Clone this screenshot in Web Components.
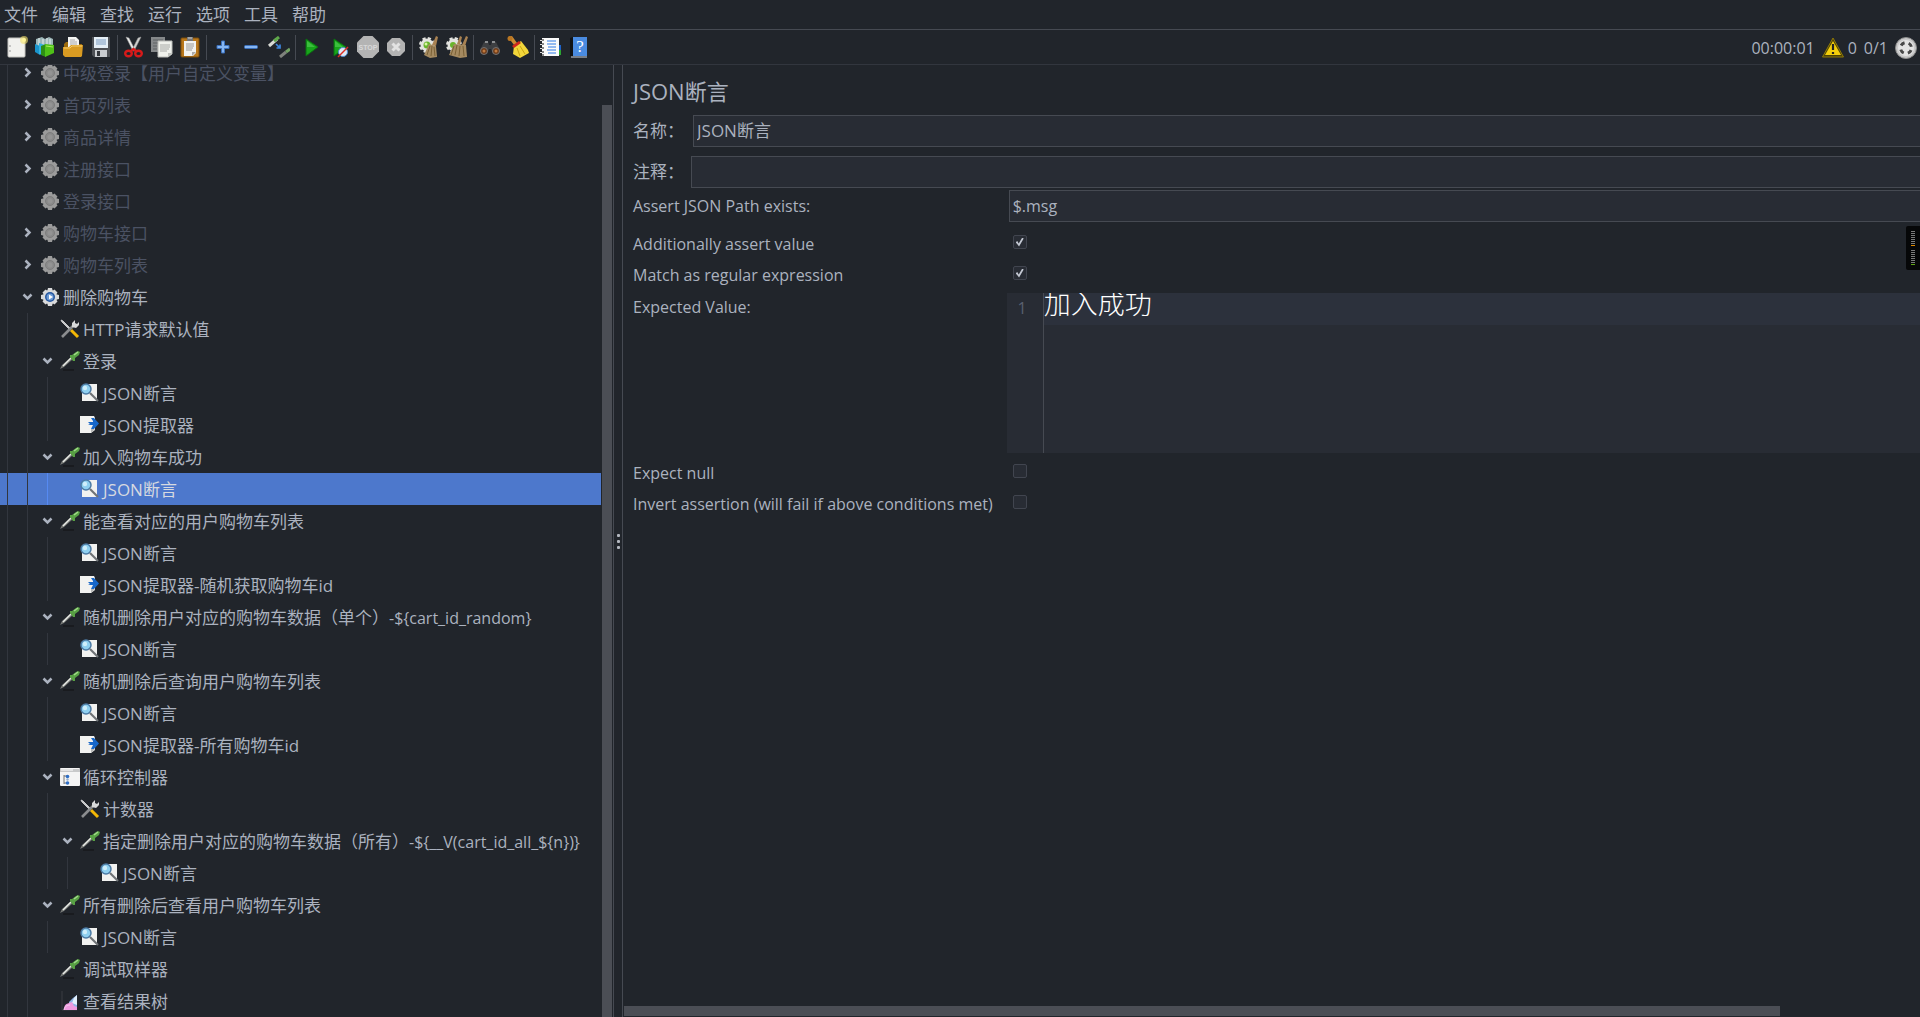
<!DOCTYPE html>
<html lang="zh-CN">
<head>
<meta charset="utf-8">
<title>JSON断言</title>
<style>
  :root {
    --bg: #21252b;
    --field: #282c34;
    --line: #464a52;
    --soft-line: #32363e;
    --text: #abb2bf;
    --muted: #4b5263;
    --thumb: #4b4e55;
    --select: #4d78cc;
  }
  html, body { height: 100%; }
  body {
    margin: 0;
    background: var(--bg);
    color: var(--text);
    font: 17px/32px "Open Sans", "Noto Sans CJK SC", sans-serif;
    overflow: hidden;
  }
</style>
</head>
<body>
<jm-app></jm-app>

<script>
const GEAR = 'M8 1h4l1 4H7zM8 19h4l1-4H7zM1 8v4l4 1V7zM19 8v4l-4 1V7zM2.500 5.500l3-3 3 2-4 4zM17.500 5.500l-3-3-3 2 4 4zM2.500 14.500l3 3 3-2-4-4zM17.500 14.500l-3 3-3-2 4-4z';
const ICONS = {
  newfile: `<rect x="2" y="2" width="17" height="19" rx="1" fill="#f1f1ee" stroke="#c4c4c0"/><path d="M4 9v2M4 14v2" stroke="#999"/><circle cx="18" cy="4" r="4" fill="#f5e36b" opacity=".6"/><circle cx="18" cy="4" r="2" fill="#fff59a"/>`,
  templates: `<path d="M2 3l6-2 3 2 4-2 4 2v10H2z" fill="#9db6b8"/><path d="M5 2v8M9 3v8M13 2v6M16 3v6" stroke="#e6eeee"/><path d="M1 8l5 2v9l-5-3z" fill="#1a94cc"/><path d="M5 7l6 2v11l-6-2z" fill="#35b2e0"/><path d="M7 10l5-2v13l-5-2z" fill="#2d8f14"/><path d="M11 8l9 1v8l-9 4z" fill="#4fc018"/><path d="M12 10l7 1" stroke="#a4ee5c"/>`,
  open: `<path d="M2 8l2-2h5l2 2h9v12H2z" fill="#9c6a0c"/><path d="M6 1h8l3 3v9H6z" fill="#f4f4f2"/><path d="M8 4h5M8 6h7M8 8h7" stroke="#aaa"/><path d="M1 11h6l2-2h12l-1 11-1 1H3l-2-2z" fill="#d99b22"/><path d="M2 12h6l2-2h10" stroke="#f5cd6a" fill="none"/>`,
  save: `<path d="M2 1h18v20H4l-2-2z" fill="#4d5055"/><path d="M4 1h14v11H4z" fill="#e4eef6"/><path d="M6 4h10M6 6h10M6 8h10" stroke="#7d9cc0"/><path d="M5 14h12v7H5z" fill="#c9ccd0"/><path d="M7 15h3v5H7z" fill="#34373c"/>`,
  cut: `<path d="M3 1l3 1 6 12-2 1z" fill="#ececea" stroke="#999" stroke-width=".5"/><path d="M18 1l-3 1-6 12 2 1z" fill="#cfcfcd" stroke="#999" stroke-width=".5"/><g fill="none" stroke="#d71a1a" stroke-width="2.4"><ellipse cx="5.500" cy="17.500" rx="3.300" ry="2.800"/><ellipse cx="15.500" cy="17.500" rx="3.300" ry="2.800"/><path d="M8 15l2.500-2 2.500 2"/></g>`,
  copy: `<rect x="0" y="1" width="14" height="15" fill="#85888a"/><path d="M2 4h10M2 7h10M2 10h4M2 13h4" stroke="#5f6264"/><path d="M7 5h14v13l-4 3H7z" fill="#eff1ec" stroke="#babcb8"/><path d="M9 9h10M9 11h10M9 13h9M9 15h7" stroke="#a9aba8"/><path d="M21 17h-4v4z" fill="#bfc1bd"/>`,
  paste: `<rect x="2" y="2" width="18" height="19" rx="1" fill="#b8771b" stroke="#7d4f0c"/><path d="M5 5h12v12l-3 3H5z" fill="#f2f2ef"/><path d="M8 1h6v4H8z" fill="#777"/><path d="M9 2h4" stroke="#ccc"/><path d="M7 8h8M7 10h8M7 12h7M7 14h6" stroke="#9a9a98"/><path d="M17 16h-4v4z" fill="#aaa"/>`,
  plus: `<path d="M9.500 5h3v4.500H17v3h-4.500V17h-3v-4.500H5v-3h4.500z" fill="#86b6f2" stroke="#3a6fbb"/>`,
  minus: `<rect x="4.500" y="9.500" width="13" height="3" rx="1" fill="#86b6f2" stroke="#3a6fbb"/>`,
  toggle: `<path d="M1 10L9 3" stroke="#d9dbd6" stroke-width="3"/><path d="M6 5l5-4" stroke="#5fa84a" stroke-width="3"/><path d="M8 8l4 4M12 8.500V12H8.500" stroke="#3c86e0" stroke-width="1.700" fill="none"/><path d="M12 21l6-5" stroke="#7f827d" stroke-width="3"/><path d="M18 16l4-3" stroke="#72a164" stroke-width="3"/>`,
  run: `<path d="M5 3l12 8-12 9z" fill="#18a51b" stroke="#0b6f10"/><path d="M6 5l8 6H6z" fill="#4bc94d" opacity=".7"/>`,
  runnp: `<path d="M5 3l12 8-12 9z" fill="#18a51b" stroke="#0b6f10"/><path d="M6 5l8 6H6z" fill="#4bc94d" opacity=".7"/><circle cx="14" cy="16" r="4.500" fill="#dfe9f5" stroke="#4f8bd0"/><path d="M9 21L19 11" stroke="#dd2c22" stroke-width="1.500"/>`,
  stop: `<path d="M6.500 0h9L22 6.500v9L15.500 22h-9L0 15.500v-9z" fill="#b4b4b4"/><text x="11" y="14" text-anchor="middle" font-family="Liberation Sans" font-weight="700" font-size="7" fill="#d8d8d8">STOP</text>`,
  shutdown: `<path d="M7 2h8l5 5v8l-5 5H7l-5-5V7z" fill="#b3b3b3"/><path d="M7.500 7.500l7 7M14.500 7.500l-7 7" stroke="#e2e2e2" stroke-width="3"/>`,
  clear: `<circle cx="9" cy="9" r="6.500" fill="#e3e3df" stroke="#e3e3df" stroke-width="3" stroke-dasharray="3 2.100"/><circle cx="9" cy="9" r="3.500" fill="#69b52b"/><circle cx="8" cy="8" r="1.500" fill="#d8f5a4"/><path d="M18 0l2 1-2 9-4-1z" fill="#a98252"/><path d="M11 8l7 2 1 11-7 1-6-3z" fill="#a58a60"/><path d="M12 10l-3 9M14 10l-1 10M16 11l1 9" stroke="#7b6136"/>`,
  clearall: `<circle cx="8" cy="9" r="6.500" fill="#e3e3df" stroke="#e3e3df" stroke-width="3" stroke-dasharray="3 2.100"/><circle cx="7" cy="9" r="3" fill="#69b52b"/><path d="M14 0l2 1-2 8-3-1zM20 0l2 1-3 9-3-1z" fill="#a98252"/><path d="M8 8l12 1 1 12-7 1-11-3z" fill="#a58a60"/><path d="M8 10l-3 9M11 9l-2 10M14 10l-1 10M17 10l1 10" stroke="#7b6136"/>`,
  find: `<path d="M5 6l4-1 1 4h2l1-4 4 1 4 8-1 4h-6l-2-5h-2l-2 5H2l-1-4z" fill="#3d3f42"/><path d="M6 6l3 0M13 6h3" stroke="#8c8e91" stroke-width="2"/><circle cx="5" cy="15" r="3.500" fill="#6e3b18" stroke="#717377"/><circle cx="17" cy="15" r="3.500" fill="#6e3b18" stroke="#717377"/><circle cx="5" cy="15" r="1.500" fill="#c07a40"/><circle cx="17" cy="15" r="1.500" fill="#c07a40"/>`,
  reset: `<path d="M1 1l4-1 5 7-3 2z" fill="#cd8b33"/><circle cx="3" cy="2.500" r="2.500" fill="#b97622"/><path d="M7 10l7-5 7 9 1 3-9 5-7-4z" fill="#f2d63a"/><path d="M5 10l7-5 2 2-7 5z" fill="#d0281c"/><path d="M10 12l3 8M13 10l5 8" stroke="#c9a512"/>`,
  func: `<rect x="2" y="2" width="17" height="18" fill="#fafafa"/><path d="M1 4h3M1 8h3M1 12h3M1 16h3M1 19h3" stroke="#111"/><path d="M0 4.500h2M0 8.500h2M0 12.500h2M0 16.500h2" stroke="#ddd"/><path d="M7 5h9M7 8h9M8 11h8M7 14h9M8 17h8" stroke="#2e7be6"/><path d="M19 9h2v5h-2z" fill="#1d62c8"/><path d="M19 14h2v5h-2z" fill="#2aa532"/>`,
  help: `<path d="M2 2l3-1v20l-3-1z" fill="#101214"/><rect x="5" y="1" width="14" height="19" fill="#4a8be0"/><path d="M3 21h16" stroke="#cfd7e2"/><text x="12" y="16" text-anchor="middle" font-family="Liberation Serif" font-size="17" fill="#fff">?</text>`,
  warn: `<path d="M11 1L21.500 20H.500z" fill="#4c4106" stroke="#8f7a08"/><path d="M11 4L19 18H3z" fill="#f3ce0b"/><path d="M11 7v6M11 15v2" stroke="#222" stroke-width="2.200"/>`,
  threads: `<circle cx="11" cy="11" r="10.500" fill="#c9c9c9" stroke="#8b8b8b"/><circle cx="11" cy="11" r="8" fill="#e4e4e4"/><circle cx="11" cy="11" r="5.500" fill="none" stroke="#484848" stroke-width="3" stroke-dasharray="4.320" stroke-dashoffset="-2.160"/>`,
  gear: `<g fill="#d9dadb"><circle cx="10" cy="10" r="7"/><path d="${GEAR}"/></g><circle cx="10" cy="10" r="5" fill="#24569f"/><circle cx="10" cy="10" r="3.500" fill="#6c9ad4"/><path d="M9 7.500l4 2.500-4 2.500z" fill="#fff"/>`,
  gearoff: `<g fill="#9b9b9b"><circle cx="10" cy="10" r="7"/><path d="${GEAR}"/></g><circle cx="10" cy="10" r="4.500" fill="#8a8a8a" stroke="#7d7d7d"/><circle cx="10" cy="10" r="2.500" fill="#949494"/>`,
  tools: `<path d="M1 1l2 1 8 8-1 1L2 3z" fill="#c9cacb" stroke="#c9cacb"/><path d="M11 11l7 7" stroke="#f2b705" stroke-width="3"/><path d="M2 18L13 7" stroke="#8b8d8f" stroke-width="2.600"/><path d="M12 8V4l3-3v3l2 1 2-2v3l-3 3z" fill="#d8d9da"/>`,
  dropper: `<path d="M3 19h11" stroke="#17191c" stroke-width="1.500"/><path d="M0 18l2-4L11 6l2 2-9 8z" fill="#777a77"/><path d="M3 15L11 7" stroke="#e8eae6" stroke-width="1.400"/><path d="M10 4l2 0 4-3 2-1 2 1-1 3-4 3 0 3-2 0-3-4z" fill="#58a044"/><path d="M14 4l4-3" stroke="#a2d98b" stroke-width="1.500"/>`,
  assert: `<path d="M5 1h12v17H2V8z" fill="#f2f2f0"/><path d="M10 10l8 8" stroke="#6f7376" stroke-width="2.200"/><circle cx="6" cy="6" r="5" fill="#8fd0f0" stroke="#4d7ba5" stroke-width="1.500"/><circle cx="5" cy="5" r="2.200" fill="#cfeefb"/>`,
  extract: `<path d="M0 1h14l1 2v12l-4 3H0z" fill="#f2f2f0"/><path d="M15 14h-4v4z" fill="#b9bab8"/><path d="M8 7h5V6l-2-3h3l5 5.500-5 5.500h-3l2-4h-5l2-1z" fill="#1767c9"/>`,
  loop: `<rect x="0" y="1" width="20" height="18" rx="1" fill="#f4f4f4"/><path d="M0 2h20v3H0z" fill="#c8c9ca"/><path d="M1 3h12" stroke="#fff"/><path d="M4 8v9M4 9h3M4 16h3" stroke="#777"/><circle cx="7.500" cy="9.500" r="1.800" fill="#2f6fc6"/><circle cx="7.500" cy="12.500" r="1.200" fill="#93aed0"/><circle cx="7.500" cy="16" r="1.800" fill="#2f6fc6"/>`,
  graph: `<path d="M2 0v19h15" stroke="#3b3d42" fill="none"/><path d="M9 18v-7l4-4 4-3v15z" fill="#8fb4e8"/><path d="M12 12l2-5 3-3v10z" fill="#e3f1fd"/><path d="M4 19c0-5 2-6 5-7l3-1 2 4 3 1v3z" fill="#ee9be0"/><path d="M4 19c0-3 3-5 6-5" stroke="#f8cdf0" fill="none"/>`
};
const svg = (name, size) => `<svg width="${size}" height="${size}" viewBox="0 0 ${size} ${size}" aria-hidden="true">${ICONS[name]}</svg>`;
const define = (tag, render) => customElements.define(tag, class extends HTMLElement {
  constructor() { super(); this.attachShadow({ mode: 'open' }); }
  connectedCallback() { this.shadowRoot.innerHTML = render(this); }
});

define('jm-menubar', () => `
  <style>
    :host { display: flex; gap: 14px; height: 29px; padding-left: 4px; border-bottom: 1px solid var(--line); }
    button { all: unset; line-height: 28px; }
  </style>
  ${['文件', '编辑', '查找', '运行', '选项', '工具', '帮助'].map(t => `<button>${t}</button>`).join('')}`);

define('jm-toolbutton', el => `
  <style>
    :host { display: flex; }
    button { all: unset; display: flex; width: 28px; justify-content: center; align-items: center; }
    svg { display: block; }
  </style>
  <button aria-label="${el.getAttribute('icon')}">${svg(el.getAttribute('icon'), 22)}</button>`);

const GROUPS = [['newfile', 'templates', 'open', 'save'], ['cut', 'copy', 'paste'], ['plus', 'minus', 'toggle'],
  ['run', 'runnp', 'stop', 'shutdown'], ['clear', 'clearall'], ['find', 'reset'], ['func', 'help']];
define('jm-toolbar', () => `
  <style>
    :host { display: flex; height: 34px; padding: 0 3px; border-bottom: 1px solid var(--soft-line); }
    i { width: 1px; margin: 5px 2px 4px; background: var(--line); }
    .status { display: flex; align-items: center; margin-left: auto; gap: 7px; font-size: 16px; line-height: 34px; padding-top: 1px; }
    .warn { display: flex; align-items: center; gap: 4px; }
    svg { display: block; }
  </style>
  ${GROUPS.map(g => g.map(n => `<jm-toolbutton icon="${n}"></jm-toolbutton>`).join('')).join('<i></i>')}
  <div class="status"><span class="time">00:00:01</span><span class="warn">${svg('warn', 22)}<span>0</span></span><span>0/1</span>${svg('threads', 22)}</div>`);

define('jm-row', el => {
  const depth = Number(el.getAttribute('depth'));
  const open = el.getAttribute('state');
  const chev = open === 'open' ? '<path d="M3.500 13.500l4 4 4-4"/>' : open === 'closed' ? '<path d="M5.500 11.500l4 4-4 4"/>' : '';
  return `
  <style>
    :host { display: flex; align-items: center; height: 32px; white-space: nowrap; }
    :host([off]) { color: var(--muted); }
    :host([selected]) { background: var(--select); color: #d7dae0; }
    .guide, .chev { flex: none; width: 20px; height: 32px; }
    .guide::before { content: ""; display: block; width: 1px; height: 32px; margin-left: 7px; background: var(--soft-line); }
    :host([selected]) .guide:nth-last-of-type(2)::before { background: #568af2; }
    .chev { fill: none; stroke: #abb2bf; stroke-width: 2.500; }
    .icon { display: block; flex: none; width: 20px; height: 20px; margin-right: 3px; }
    .icon svg { display: block; }
    .text { padding-top: 1px; }
    ::slotted(small) { font-size: 16px; }
  </style>
  ${'<div class="guide"></div>'.repeat(depth + 1)}<svg class="chev" viewBox="0 0 20 32">${chev}</svg>
  <div class="icon">${svg(el.getAttribute('icon'), 20)}</div><span class="text"><slot></slot></span>`;
});

const ROWS = [
  [0, 'closed', 'gearoff', '中级登录【用户自定义变量】'], [0, 'closed', 'gearoff', '首页列表'],
  [0, 'closed', 'gearoff', '商品详情'], [0, 'closed', 'gearoff', '注册接口'],
  [0, '', 'gearoff', '登录接口'], [0, 'closed', 'gearoff', '购物车接口'],
  [0, 'closed', 'gearoff', '购物车列表'], [0, 'open', 'gear', '删除购物车'],
  [1, '', 'tools', 'HTTP请求默认值'], [1, 'open', 'dropper', '登录'],
  [2, '', 'assert', 'JSON断言'], [2, '', 'extract', 'JSON提取器'],
  [1, 'open', 'dropper', '加入购物车成功'], [2, '', 'assert', 'JSON断言', 'selected'],
  [1, 'open', 'dropper', '能查看对应的用户购物车列表'], [2, '', 'assert', 'JSON断言'],
  [2, '', 'extract', 'JSON提取器-随机获取购物车id'],
  [1, 'open', 'dropper', '随机删除用户对应的购物车数据（单个）<small>-${cart_id_random}</small>'], [2, '', 'assert', 'JSON断言'],
  [1, 'open', 'dropper', '随机删除后查询用户购物车列表'], [2, '', 'assert', 'JSON断言'],
  [2, '', 'extract', 'JSON提取器-所有购物车id'], [1, 'open', 'loop', '循环控制器'],
  [2, '', 'tools', '计数器'],
  [2, 'open', 'dropper', '指定删除用户对应的购物车数据（所有）<small>-${__V(cart_id_all_${n})}</small>'], [3, '', 'assert', 'JSON断言'],
  [1, 'open', 'dropper', '所有删除后查看用户购物车列表'], [2, '', 'assert', 'JSON断言'],
  [1, '', 'dropper', '调试取样器'], [1, '', 'graph', '查看结果树']
];
define('jm-tree', () => `
  <style>
    :host { display: flex; overflow: hidden; }
    .rows { flex: 1; min-width: 0; margin-top: -8px; }
    .bar { flex: none; width: 12px; display: flex; flex-direction: column; }
    .bar::before { content: ""; height: 40px; }
    .bar::after { content: ""; flex: 1; margin: 0 1px; background: var(--thumb); }
    small { font-size: 16px; }
  </style>
  <div class="rows" role="tree">${ROWS.map(([d, s, i, t, sel]) =>
    `<jm-row role="treeitem" depth="${d}" state="${s}" icon="${i}" ${i === 'gearoff' ? 'off' : ''} ${sel || ''}>${t}</jm-row>`).join('')}</div>
  <div class="bar"></div>`);

define('jm-splitter', () => `
  <style>
    :host { display: flex; flex-direction: column; align-items: center; justify-content: center; gap: 3px;
      width: 8px; border: solid var(--line); border-width: 0 1px; }
    i { width: 3px; height: 3px; border-radius: 1px; background: #b4b8c0; }
  </style><i></i><i></i><i></i>`);

define('jm-editor', () => `
  <style>
    :host { display: flex; height: 160px; background: var(--field); }
    .gutter { width: 20px; padding-right: 16px; text-align: right; color: #5a6070; font-size: 16px; line-height: 30px; border-right: 1px solid var(--line); }
    textarea { flex: 1; min-width: 0; border: 0; outline: 0; resize: none; padding: 0; color: #fff; overflow: hidden;
      background: linear-gradient(#2c313c 32px, transparent 32px);
      font: 300 27px/20px "Noto Sans CJK SC", sans-serif; }
  </style>
  <div class="gutter">1</div><textarea aria-label="Expected Value" spellcheck="false">加入成功</textarea>`);

define('jm-form', () => `
  <style>
    :host { display: flex; flex-direction: column; min-width: 0; overflow: hidden; }
    .body { flex: 1; padding: 10px 0 0 10px; }
    h1 { margin: 0 0 8px; font-size: 22px; line-height: 32px; font-weight: 400; }
    .line { display: flex; margin-bottom: 9px; }
    .line label { width: 60px; }
    .line + .line { margin-bottom: 2px; }
    .line + .line label { width: 58px; }
    input:not([type]) { flex: 1; min-width: 0; height: 32px; box-sizing: border-box; padding: 0 3px; border: 1px solid var(--line);
      border-right: 0; background: var(--field); color: inherit; font: inherit; outline: 0; }
    .grid { display: grid; grid-template-columns: max-content 1fr; column-gap: 14px; grid-template-rows: 32px 6px 31px 31px 3px 160px 4px 31px 31px; }
    .grid label { font-size: 16px; line-height: 33px; grid-column: 1; }
    .grid .r4 { line-height: 29px; }
    .grid input:not([type]) { margin-left: 2px; font-size: 16px; }
    .r1 { grid-row: 1; } .r2 { grid-row: 3; } .r3 { grid-row: 4; } .r4 { grid-row: 6; } .r5 { grid-row: 8; } .r6 { grid-row: 9; }
    input[type=checkbox] { appearance: none; width: 14px; height: 14px; margin: 7px 6px; border: 1px solid #41454f; border-radius: 2px;
      background: var(--field); display: grid; place-items: center; }
    input:checked::before { content: ""; width: 8px; height: 9px; background: #c3c8d2; clip-path: polygon(0 52%, 20% 40%, 38% 66%, 82% 0, 100% 12%, 42% 100%); }
    .scroll { display: flex; height: 11px; padding-left: 1px; }
    .scroll::before { content: ""; flex: 33; height: 10px; background: var(--thumb); }
    .scroll::after { content: ""; flex: 4; }
  </style>
  <div class="body">
    <h1>JSON断言</h1>
    <div class="line"><label for="name">名称：</label><input id="name" value="JSON断言"></div>
    <div class="line"><label for="note">注释：</label><input id="note"></div>
    <div class="grid">
      <label class="r1" for="path">Assert JSON Path exists:</label><input class="r1" id="path" value="$.msg">
      <label class="r2" for="add">Additionally assert value</label><input class="r2" id="add" type="checkbox" checked>
      <label class="r3" for="re">Match as regular expression</label><input class="r3" id="re" type="checkbox" checked>
      <label class="r4">Expected Value:</label><jm-editor class="r4"></jm-editor>
      <label class="r5" for="nul">Expect null</label><input class="r5" id="nul" type="checkbox">
      <label class="r6" for="inv">Invert assertion (will fail if above conditions met)</label><input class="r6" id="inv" type="checkbox">
    </div>
  </div>
  <div class="scroll"></div>`);

define('jm-meter', () => `
  <style>
    :host { display: flex; flex-direction: column; align-items: center; gap: 4px; box-sizing: border-box; width: 14px; height: 44px;
      padding-top: 5px; background: #060708; border-radius: 2px 0 0 2px; }
    i { width: 4px; height: 15px; background: linear-gradient(transparent 14px, var(--level) 14px),
      repeating-linear-gradient(#7a7a7a 0 1px, transparent 1px 2px); }
    i:first-child, i { --level: #e08a00; }
    i:last-child { --level: #62a617; }
  </style><i></i><i></i>`);

define('jm-app', () => `
  <style>
    :host { display: flex; flex-direction: column; height: 100vh; }
    .main { flex: 1; min-height: 0; display: flex; }
    jm-tree { flex: none; width: 613px; }
    jm-form { flex: 1; }
    jm-meter { position: absolute; right: 0; top: 226px; }
  </style>
  <jm-menubar></jm-menubar><jm-toolbar></jm-toolbar>
  <div class="main"><jm-tree></jm-tree><jm-splitter></jm-splitter><jm-form></jm-form></div>
  <jm-meter></jm-meter>`);
</script>
</body>
</html>
